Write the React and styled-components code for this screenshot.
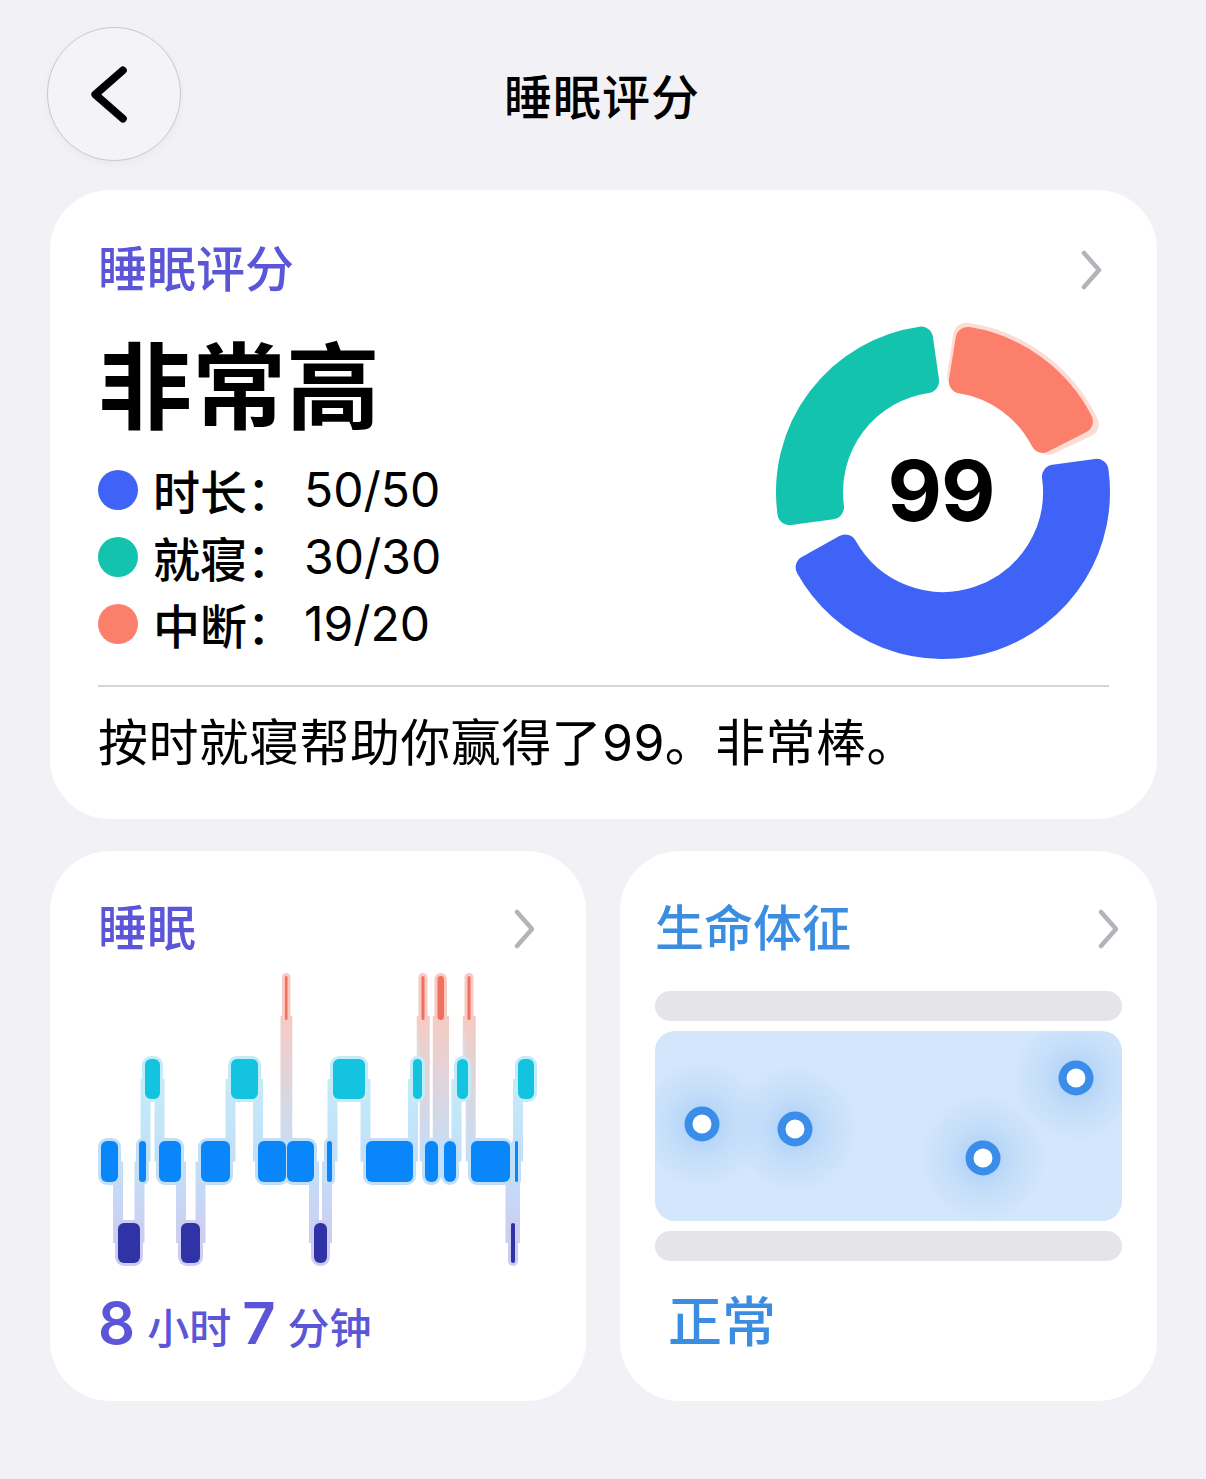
import React from 'react';
import styled, { createGlobalStyle } from 'styled-components';

const PURPLE = '#5b56d8';
const SKY = '#3b8de2';

const GlobalStyle = createGlobalStyle`
  html, body {
    margin: 0;
    padding: 0;
    background: #f1f1f6;
  }
  body {
    font-family: Inter, "Noto Sans CJK SC", sans-serif;
    color: #000;
    -webkit-font-smoothing: antialiased;
  }
`;

const Page = styled.div`
  width: 1206px;
  min-height: 1479px;
  padding: 0 49px 0 50px;
  box-sizing: border-box;
  background: #f1f1f6;
`;

const Header = styled.header`
  height: 190px;
  box-sizing: border-box;
  padding-top: 27px;
  margin-left: -3px;
  display: grid;
  grid-template-columns: 134px 1fr 134px;
  align-items: start;
`;

const BackButton = styled.button`
  width: 134px;
  height: 134px;
  padding: 0;
  border-radius: 50%;
  border: 1.5px solid #c8c8cd;
  background: #f4f4f8;
  box-shadow: 0 3px 8px rgba(0, 0, 0, 0.04);
  display: flex;
  align-items: center;
  justify-content: center;
`;

const HeaderTitle = styled.h1`
  margin: 0;
  padding-top: 4px;
  text-align: center;
  font-size: 48px;
  font-weight: 500;
  line-height: 134px;
  letter-spacing: 1px;
`;

const Card = styled.section`
  background: #fff;
  border-radius: 60px;
  box-sizing: border-box;
  display: flex;
  flex-direction: column;
`;

const ScoreCard = styled(Card)`
  padding: 52px 48px 46px 48px;
`;

const CardHead = styled.div`
  height: 56px;
  display: flex;
  align-items: center;
  justify-content: space-between;
`;

const CardTitle = styled.h2`
  margin: 0;
  font-size: 49px;
  line-height: 56px;
  font-weight: 500;
  color: ${p => p.$color};
`;

const ScoreBody = styled.div`
  margin-top: 40px;
  display: flex;
  align-items: flex-start;
  justify-content: space-between;
`;

const Grade = styled.div`
  font-size: 94px;
  line-height: 100px;
  font-weight: 700;
`;

const Legend = styled.ul`
  list-style: none;
  margin: 18px 0 0 0;
  padding: 0;
`;

const LegendRow = styled.li`
  height: 67px;
  display: flex;
  align-items: center;
  font-size: 47px;
`;

const Dot = styled.span`
  width: 40px;
  height: 40px;
  border-radius: 50%;
  background: ${p => p.$color};
  margin-right: 15px;
  flex: none;
`;

const LegendLabel = styled.span`
  width: 141px;
  font-weight: 500;
`;

const LegendValue = styled.span`
  margin-left: 10px;
  font-size: 48px;
  font-weight: 400;
`;

const Donut = styled.div`
  margin-top: -16px;
  margin-right: -4px;
  display: grid;
  place-items: center;
  > * {
    grid-area: 1 / 1;
  }
`;

const DonutValue = styled.span`
  font-size: 84px;
  font-weight: 700;
  letter-spacing: -1px;
  margin-right: 4px;
  margin-top: -4px;
`;

const Divider = styled.hr`
  margin: 23px 0 0 0;
  border: 0;
  height: 1.5px;
  background: #d6d6da;
`;

const Summary = styled.p`
  margin: 26px 0 0 0;
  font-size: 50px;
  letter-spacing: 0.4px;
  line-height: 60px;
`;

const TileGrid = styled.div`
  margin-top: 32px;
  display: grid;
  grid-template-columns: 536px 537px;
  column-gap: 34px;
`;

const Tile = styled(Card)`
  height: 550px;
  padding: 50px ${p => p.$pad}px 0 ${p => p.$pad}px;
`;

const ChartSvg = styled.svg`
  display: block;
  margin: 12px 0 0 -2px;
`;

const Duration = styled.div`
  margin-top: 22px;
  line-height: 64px;
  color: ${PURPLE};
  display: flex;
  align-items: baseline;
`;

const Num = styled.span`
  font-size: 58px;
  font-weight: 600;
  margin-right: 12px;
`;

const Unit = styled.span`
  font-size: 42px;
  font-weight: 500;
  margin-right: 11px;
`;

const GreyBar = styled.div`
  height: 30px;
  border-radius: 15px;
  background: #e4e4e9;
  margin-top: ${p => p.$top}px;
`;

const VitalsPanel = styled.div`
  margin-top: 10px;
  height: 190px;
  border-radius: 20px;
  background: #d3e6fb;
  overflow: hidden;
  svg {
    display: block;
  }
`;

const Status = styled.div`
  margin-top: 30px;
  padding-left: 13px;
  font-size: 54px;
  line-height: 64px;
  font-weight: 500;
  color: ${SKY};
`;

function Chevron({ style }) {
  return (
    <svg width="28" height="44" viewBox="0 0 28 44" style={style}>
      <polyline points="7,5 22,22 7,39" fill="none" stroke="#b3b3b9" strokeWidth="4.5" strokeLinecap="round" strokeLinejoin="round" />
    </svg>
  );
}

// ring sector, angles in degrees clockwise from 12 o'clock
function sector(cx, cy, r0, r1, a0, a1) {
  const pt = (r, a) => {
    const t = (a * Math.PI) / 180;
    return `${(cx + r * Math.sin(t)).toFixed(2)} ${(cy - r * Math.cos(t)).toFixed(2)}`;
  };
  const large = a1 - a0 > 180 ? 1 : 0;
  return `M ${pt(r1, a0)} A ${r1} ${r1} 0 ${large} 1 ${pt(r1, a1)} L ${pt(r0, a1)} A ${r0} ${r0} 0 ${large} 0 ${pt(r0, a0)} Z`;
}

function RoundSector({ r0, r1, a0, a1, color, k = 12 }) {
  const rm = (r0 + r1) / 2;
  const da = (k / rm) * (180 / Math.PI);
  return (
    <path
      d={sector(170, 170, r0 + k, r1 - k, a0 + da, a1 - da)}
      fill={color}
      stroke={color}
      strokeWidth={k * 2}
      strokeLinejoin="round"
    />
  );
}

function ScoreDonut() {
  return (
    <svg width="340" height="340" viewBox="0 0 340 340">
      <RoundSector r0={104} r1={171} a0={3} a1={70} color="#fcdcd5" k={13} />
      <RoundSector r0={100} r1={167} a0={4} a1={68} color="#fb7f6b" />
      <RoundSector r0={100} r1={167} a0={77} a1={246} color="#3f63f6" />
      <RoundSector r0={100} r1={167} a0={257} a1={357} color="#13c3ae" />
    </svg>
  );
}

const LEVELS = {
  awake: { y0: 975, y1: 1019, fill: '#f2715d', glow: '#f7cbc3' },
  rem: { y0: 1058, y1: 1098, fill: '#13c3e0', glow: '#c4ebf8' },
  core: { y0: 1140, y1: 1181, fill: '#0a86fb', glow: '#c2dff9' },
  deep: { y0: 1222, y1: 1262, fill: '#2f33a6', glow: '#cdcdf1' },
};

const STAGES = [
  ['core', 101, 118], ['deep', 118, 140], ['core', 139, 146], ['rem', 145, 160],
  ['core', 159, 181], ['deep', 181, 200], ['core', 201, 230], ['rem', 231, 258],
  ['core', 258, 286], ['awake', 285, 287.5], ['core', 287, 314], ['deep', 314, 327],
  ['core', 327, 332], ['rem', 333, 365], ['core', 366, 413], ['rem', 413, 422],
  ['awake', 421.5, 424.5], ['core', 425, 438], ['awake', 437.5, 444], ['core', 444, 456],
  ['rem', 457, 468], ['awake', 467.5, 470.5], ['core', 471, 510], ['deep', 511, 515],
  ['core', 515, 518], ['rem', 518, 534],
];

function mid(level) {
  const l = LEVELS[level];
  return level === 'awake' ? l.y1 - 4 : (l.y0 + l.y1) / 2;
}

function SleepChart() {
  const links = [];
  for (let i = 0; i < STAGES.length - 1; i++) {
    const [a, , ax1] = STAGES[i];
    const [b, bx0] = STAGES[i + 1];
    const ya = mid(a);
    const yb = mid(b);
    const top = ya < yb ? a : b;
    const bottom = ya < yb ? b : a;
    links.push({
      x: (ax1 + bx0) / 2,
      y0: Math.min(ya, yb),
      y1: Math.max(ya, yb),
      from: LEVELS[top].glow,
      to: LEVELS[bottom].glow,
    });
  }

  return (
    <ChartSvg width="444" height="300" viewBox="96 968 444 300">
      <defs>
        {links.map((l, i) => (
          <linearGradient key={i} id={`link${i}`} x1="0" y1="0" x2="0" y2="1">
            <stop offset="0" stopColor={l.from} />
            <stop offset="1" stopColor={l.to} />
          </linearGradient>
        ))}
      </defs>
      {links.map((l, i) => (
        <rect key={i} x={l.x - 5} y={l.y0} width="10" height={l.y1 - l.y0} fill={`url(#link${i})`} />
      ))}
      {STAGES.map(([lv, x0, x1], i) => {
        const l = LEVELS[lv];
        const w = x1 - x0;
        return (
          <rect
            key={i}
            x={x0 - 3}
            y={l.y0 - 3}
            width={w + 6}
            height={l.y1 - l.y0 + 6}
            rx={Math.min((w + 6) / 2, 9)}
            fill={l.glow}
          />
        );
      })}
      {STAGES.map(([lv, x0, x1], i) => {
        const l = LEVELS[lv];
        const w = x1 - x0;
        return (
          <rect
            key={i}
            x={x0}
            y={l.y0}
            width={w}
            height={l.y1 - l.y0}
            rx={Math.min(w / 2, 6)}
            fill={l.fill}
          />
        );
      })}
    </ChartSvg>
  );
}

const VITAL_POINTS = [
  [47, 93],
  [140, 98],
  [328, 127],
  [421, 47],
];

function VitalsChart() {
  return (
    <svg width="468" height="190" viewBox="0 0 468 190">
      <defs>
        <radialGradient id="vitalGlow">
          <stop offset="0" stopColor="#8fbff4" stopOpacity="0.7" />
          <stop offset="0.5" stopColor="#a5ccf6" stopOpacity="0.35" />
          <stop offset="1" stopColor="#a5ccf6" stopOpacity="0" />
        </radialGradient>
      </defs>
      {VITAL_POINTS.map(([x, y], i) => (
        <circle key={`g${i}`} cx={x} cy={y} r="64" fill="url(#vitalGlow)" />
      ))}
      {VITAL_POINTS.map(([x, y], i) => (
        <circle key={i} cx={x} cy={y} r="13.5" fill="#fff" stroke="#3a8eea" strokeWidth="8" />
      ))}
    </svg>
  );
}

export default function App() {
  return (
    <Page>
      <GlobalStyle />
      <Header>
        <BackButton aria-label="返回">
          <svg width="134" height="134" viewBox="0 0 134 134">
            <polyline points="76,43 48,67.5 76,92" fill="none" stroke="#000" strokeWidth="8" strokeLinecap="round" strokeLinejoin="round" />
          </svg>
        </BackButton>
        <HeaderTitle>睡眠评分</HeaderTitle>
        <div />
      </Header>

      <ScoreCard>
        <CardHead>
          <CardTitle $color={PURPLE}>睡眠评分</CardTitle>
          <Chevron style={{ marginRight: 4 }} />
        </CardHead>
        <ScoreBody>
          <div>
            <Grade>非常高</Grade>
            <Legend>
              <LegendRow>
                <Dot $color="#3f63f6" />
                <LegendLabel>时长：</LegendLabel>
                <LegendValue>50/50</LegendValue>
              </LegendRow>
              <LegendRow>
                <Dot $color="#13c3ae" />
                <LegendLabel>就寝：</LegendLabel>
                <LegendValue>30/30</LegendValue>
              </LegendRow>
              <LegendRow>
                <Dot $color="#fb7f6b" />
                <LegendLabel>中断：</LegendLabel>
                <LegendValue>19/20</LegendValue>
              </LegendRow>
            </Legend>
          </div>
          <Donut>
            <ScoreDonut />
            <DonutValue>99</DonutValue>
          </Donut>
        </ScoreBody>
        <Divider />
        <Summary>按时就寝帮助你赢得了99。非常棒。</Summary>
      </ScoreCard>

      <TileGrid>
        <Tile $pad={48}>
          <CardHead>
            <CardTitle $color={PURPLE}>睡眠</CardTitle>
            <Chevron />
          </CardHead>
          <SleepChart />
          <Duration>
            <Num>8</Num>
            <Unit>小时</Unit>
            <Num>7</Num>
            <Unit>分钟</Unit>
          </Duration>
        </Tile>
        <Tile $pad={35}>
          <CardHead>
            <CardTitle $color={SKY}>生命体征</CardTitle>
            <Chevron />
          </CardHead>
          <GreyBar $top={34} />
          <VitalsPanel>
            <VitalsChart />
          </VitalsPanel>
          <GreyBar $top={10} />
          <Status>正常</Status>
        </Tile>
      </TileGrid>
    </Page>
  );
}
